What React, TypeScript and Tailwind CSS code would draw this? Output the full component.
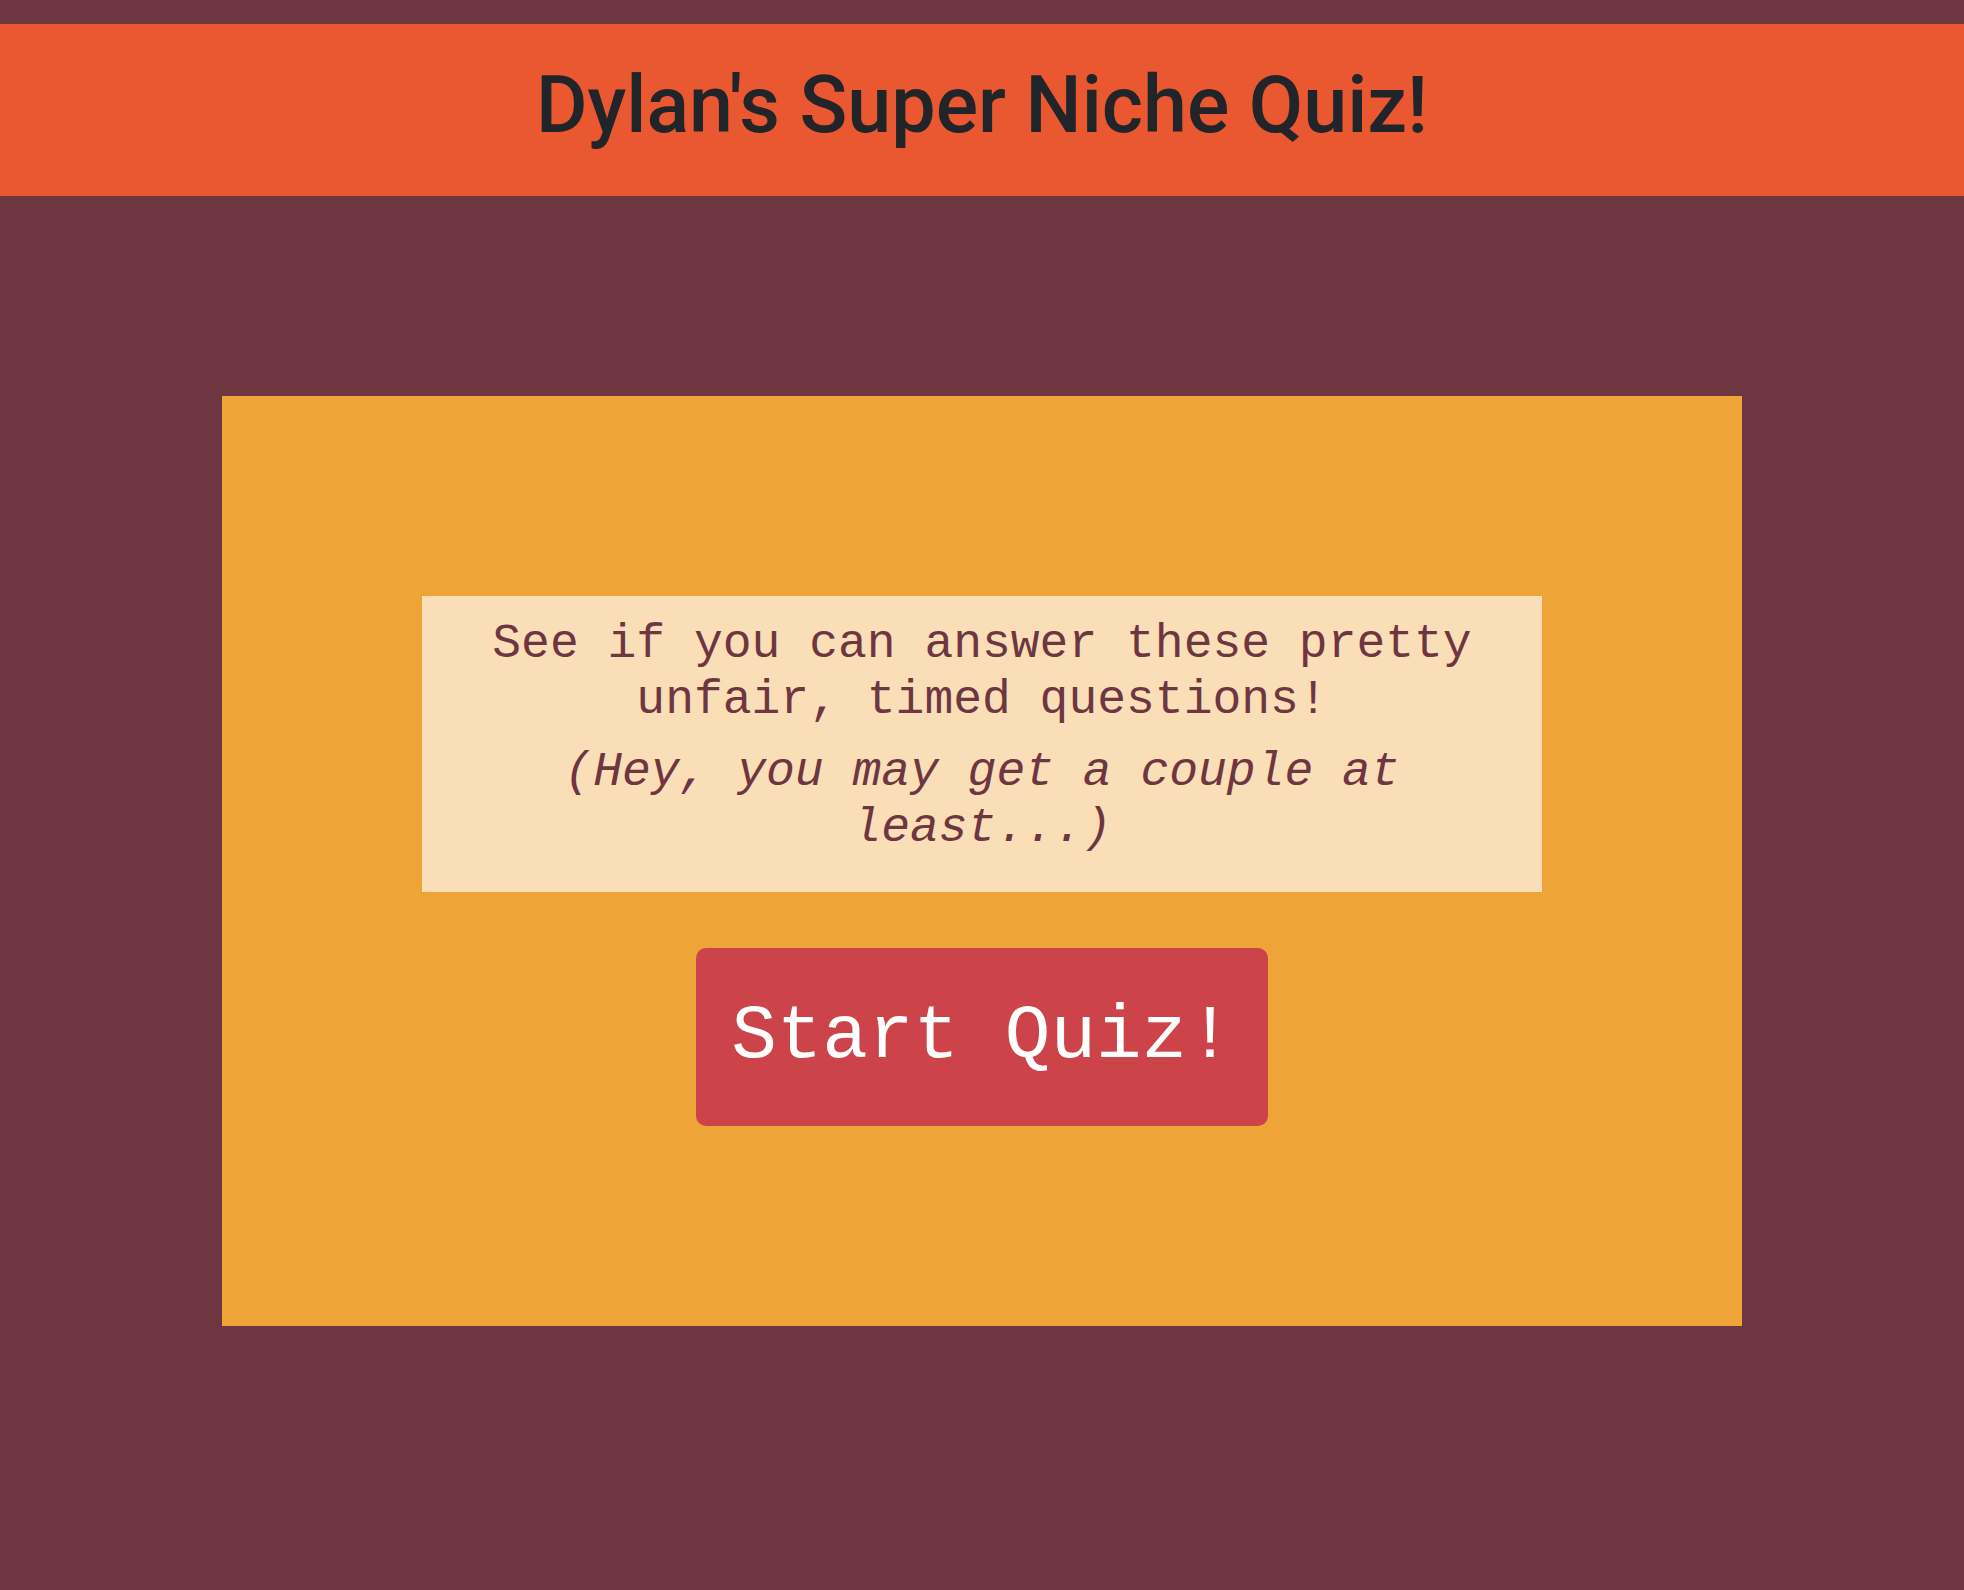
export default function App() {
  return (
    <div className="min-h-screen bg-[#6e3641] pt-6">
      <header className="bg-[#ea5831] px-6 pt-[35px] pb-[45px] text-center">
        <h1 className="font-['Roboto',sans-serif] text-[79px] leading-[92px] font-medium text-[#212529]">
          Dylan's Super Niche Quiz!
        </h1>
      </header>
      <main className="mx-auto mt-[200px] flex w-[1520px] max-w-full flex-col items-center bg-[#eea439] p-[200px] font-['Liberation_Mono',monospace]">
        <section className="w-full bg-[#fadeb8] px-12 pt-5 pb-9 text-center text-5xl leading-14 text-[#6e3641]">
          <p>See if you can answer these pretty unfair, timed questions!</p>
          <p className="mt-4 italic">(Hey, you may get a couple at least...)</p>
        </section>
        <button type="button" className="mt-14 rounded-[10px] bg-[#cc4349] px-[35px] py-11 text-[76px] leading-[90px] text-white">
          Start Quiz!
        </button>
      </main>
    </div>
  );
}
